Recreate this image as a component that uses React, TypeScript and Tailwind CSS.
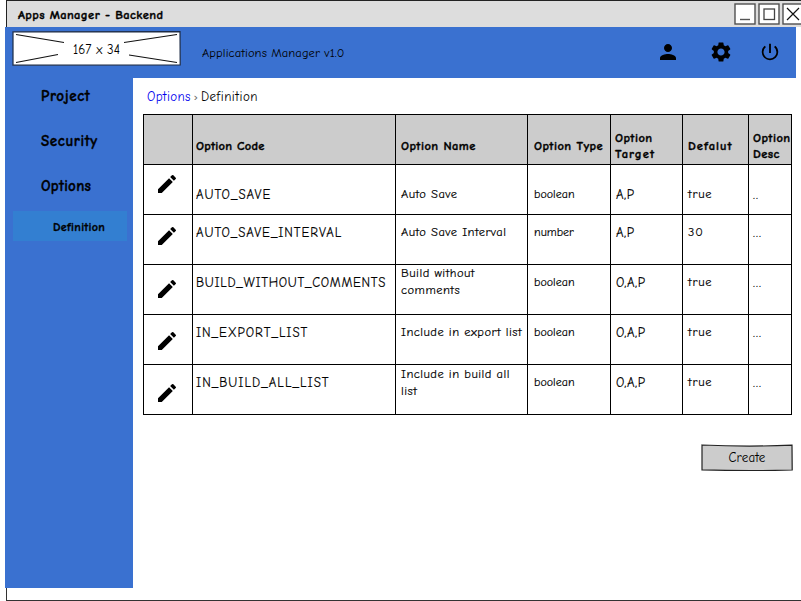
import type { ReactNode } from 'react';
import { MdEdit, MdPerson, MdPowerSettingsNew, MdSettings } from 'react-icons/md';

type Row = {
  code: string;
  name: string;
  type: string;
  target: string;
  value: string;
  desc: string;
  iconPad: string;
  textPad: string;
  namePad: string;
  codeTracking: string;
};

const rows: Row[] = [
  { code: 'AUTO_SAVE', name: 'Auto Save', type: 'boolean', target: 'A,P', value: 'true', desc: '..', iconPad: 'pt-[7px]', textPad: 'pt-[21px]', namePad: 'pt-[21px]', codeTracking: 'tracking-[1px]' },
  { code: 'AUTO_SAVE_INTERVAL', name: 'Auto Save Interval', type: 'number', target: 'A,P', value: '30', desc: '...', iconPad: 'pt-[9px]', textPad: 'pt-[9px]', namePad: 'pt-[9px]', codeTracking: 'tracking-[0.95px]' },
  { code: 'BUILD_WITHOUT_COMMENTS', name: 'Build without\ncomments', type: 'boolean', target: 'O,A,P', value: 'true', desc: '...', iconPad: 'pt-3', textPad: 'pt-[9px]', namePad: 'pt-0', codeTracking: 'tracking-[0.7px]' },
  { code: 'IN_EXPORT_LIST', name: 'Include in export list', type: 'boolean', target: 'O,A,P', value: 'true', desc: '...', iconPad: 'pt-3.5', textPad: 'pt-[9px]', namePad: 'pt-[9px]', codeTracking: 'tracking-[0.95px]' },
  { code: 'IN_BUILD_ALL_LIST', name: 'Include in build all\nlist', type: 'boolean', target: 'O,A,P', value: 'true', desc: '...', iconPad: 'pt-4', textPad: 'pt-[9px]', namePad: 'pt-px', codeTracking: 'tracking-[1.05px]' },
];

const grid = 'grid grid-cols-[49px_203px_132px_83px_72px_66px_43px]';
const heavy = 'font-bold [-webkit-text-stroke:0.35px_#000]';

function Cell({ pad, className = '', children }: { pad: string; className?: string; children?: ReactNode }) {
  return (
    <div className={`h-[50px] border-r border-b border-black whitespace-pre leading-[17px] ${pad} ${className}`}>
      {children}
    </div>
  );
}

function WindowButton({ children }: { children: ReactNode }) {
  return (
    <svg width="22" height="22" viewBox="0 0 22 22" fill="none" className="shrink-0">
      <rect x="1" y="1" width="20" height="20" fill="#fff" stroke="#505050" strokeWidth="1.4" />
      {children}
    </svg>
  );
}

function TitleBar() {
  return (
    <div className="ml-1.5 flex h-[27px] w-[795px] items-start justify-between border-t border-l border-[#222] bg-[#ddd]">
      <div className={`pt-[5px] pl-[11px] text-[12.5px] leading-[18px] tracking-[0.4px] ${heavy}`}>Apps Manager - Backend</div>
      <div className="-mr-[3px] flex gap-0.5 pt-0.5">
        <WindowButton>
          <path d="M6 16.5h10" stroke="#555" strokeWidth="1.4" />
        </WindowButton>
        <WindowButton>
          <rect x="6" y="6" width="10.5" height="10.5" stroke="#444" strokeWidth="1.3" />
        </WindowButton>
        <WindowButton>
          <path d="M5 5l12 12M17 5L5 17" stroke="#111" strokeWidth="1.2" />
        </WindowButton>
      </div>
    </div>
  );
}

function LogoPlaceholder() {
  return (
    <div className="grid h-[35px] w-[169px] place-items-center">
      <svg width="169" height="35" viewBox="0 0 169 35" className="col-start-1 row-start-1" fill="none">
        <path d="M1 .8L168 .7L168.2 34L1 34.2Z" fill="#fff" stroke="#1c2b45" strokeWidth="1.2" />
        <path d="M4 3.5L52 11.5M4 31.5L46 23.5M165 3.5L112 11.5M165 31.5L117 24" stroke="#111" strokeWidth="1.2" />
      </svg>
      <span className="col-start-1 row-start-1 pt-0.5 text-[13px] leading-4 tracking-[0.15px]">167 x 34</span>
    </div>
  );
}

function Header() {
  return (
    <header className="ml-[5px] flex h-[51px] w-[791px] bg-[#3a71d0]">
      <div className="pt-1 pl-[7px]">
        <LogoPlaceholder />
      </div>
      <div className="pt-[18px] pl-[21px] text-[12.5px] leading-4 tracking-[0.1px] whitespace-nowrap">Applications Manager v1.0</div>
      <div className="ml-auto flex pt-[13px] pr-[15px]">
        <MdPerson size={24} />
        <MdSettings size={24} className="ml-[29px]" />
        <MdPowerSettingsNew size={22} className="mt-px ml-[26px]" />
      </div>
    </header>
  );
}

function Sidebar() {
  return (
    <nav className="ml-[5px] h-[510px] w-[128px] shrink-0 bg-[#3a71d0] pt-2">
      <div className={`flex flex-col gap-[25px] pl-9 text-[15px] leading-5 tracking-[0.6px] ${heavy}`}>
        <div>Project</div>
        <div>Security</div>
        <div className="tracking-[0.3px]">Options</div>
      </div>
      <div className={`mt-[15px] ml-2 h-[30px] w-[114px] bg-[#337fd1] pl-10 text-xs leading-8 tracking-[0.3px] ${heavy}`}>Definition</div>
    </nav>
  );
}

function OptionsTable() {
  return (
    <div className="w-[649px] border-t border-l border-black text-[13px]">
      <div className={`${grid} bg-[#ccc] text-[12.5px] tracking-[0.45px] ${heavy}`}>
        <Cell pad="" />
        <Cell pad="pt-[23px] pl-[3px]" className="tracking-[0.25px]">Option Code</Cell>
        <Cell pad="pt-[23px] pl-[5px]">Option Name</Cell>
        <Cell pad="pt-[23px] pl-[6px]">Option Type</Cell>
        <Cell pad="pt-[15px] pl-1"><div className="leading-4">Option</div><div className="leading-4 tracking-[1.1px]">Target</div></Cell>
        <Cell pad="pt-[23px] pl-[5px]" className="tracking-[1px]">Defalut</Cell>
        <Cell pad="pt-[15px] pl-1"><div className="leading-4">{'Option\nDesc'}</div></Cell>
      </div>
      {rows.map((r) => (
        <div key={r.code} className={`${grid} [-webkit-text-stroke:0.15px_#000]`}>
          <Cell pad={r.iconPad} className="pl-[11px]"><MdEdit size={24} /></Cell>
          <Cell pad={r.textPad} className={`pl-[3px] ${r.codeTracking}`}>{r.code}</Cell>
          <Cell pad={r.namePad} className="pl-[5px] text-[12.5px] tracking-[0.48px]">{r.name}</Cell>
          <Cell pad={r.textPad} className="pl-[6px] text-xs">{r.type}</Cell>
          <Cell pad={r.textPad} className="pl-[5px] tracking-[0.5px]">{r.target}</Cell>
          <Cell pad={r.textPad} className="pl-[5px] text-[12.5px] tracking-[0.8px]">{r.value}</Cell>
          <Cell pad={r.textPad} className="pl-1 tracking-[1px]">{r.desc}</Cell>
        </div>
      ))}
    </div>
  );
}

export default function App() {
  return (
    <div className="h-[601px] w-[801px] overflow-hidden bg-white font-['Comic_Sans_MS','Comic_Neue','Open_Sans',sans-serif] text-black">
      <TitleBar />
      <Header />
      <div className="flex">
        <Sidebar />
        <main className="pl-2.5">
          <div className="flex h-9 items-start pt-[11px] pl-1 text-[13px] leading-4">
            <span className="tracking-[0.35px] text-[#0000ee]">Options</span>
            <span className="pr-[3px] pl-[3px] text-xs text-[#666]">›</span>
            <span className="tracking-[0.5px]">Definition</span>
          </div>
          <OptionsTable />
          <div className="-mr-px mt-[29px] flex justify-end">
            <button className="grid h-[27px] w-[92px] place-items-center">
              <svg width="92" height="27" viewBox="0 0 92 27" className="col-start-1 row-start-1">
                <path d="M1 1Q46 3 91 1.2L91.2 26Q46 27.3 1 25.8Z" fill="#ccc" stroke="#222" strokeWidth="1.2" />
              </svg>
              <span className="col-start-1 row-start-1 text-[13px] leading-4 tracking-[0.2px]">Create</span>
            </button>
          </div>
        </main>
      </div>
      <div className="ml-1.5 h-[13px] border-b border-l border-[#333]" />
    </div>
  );
}
